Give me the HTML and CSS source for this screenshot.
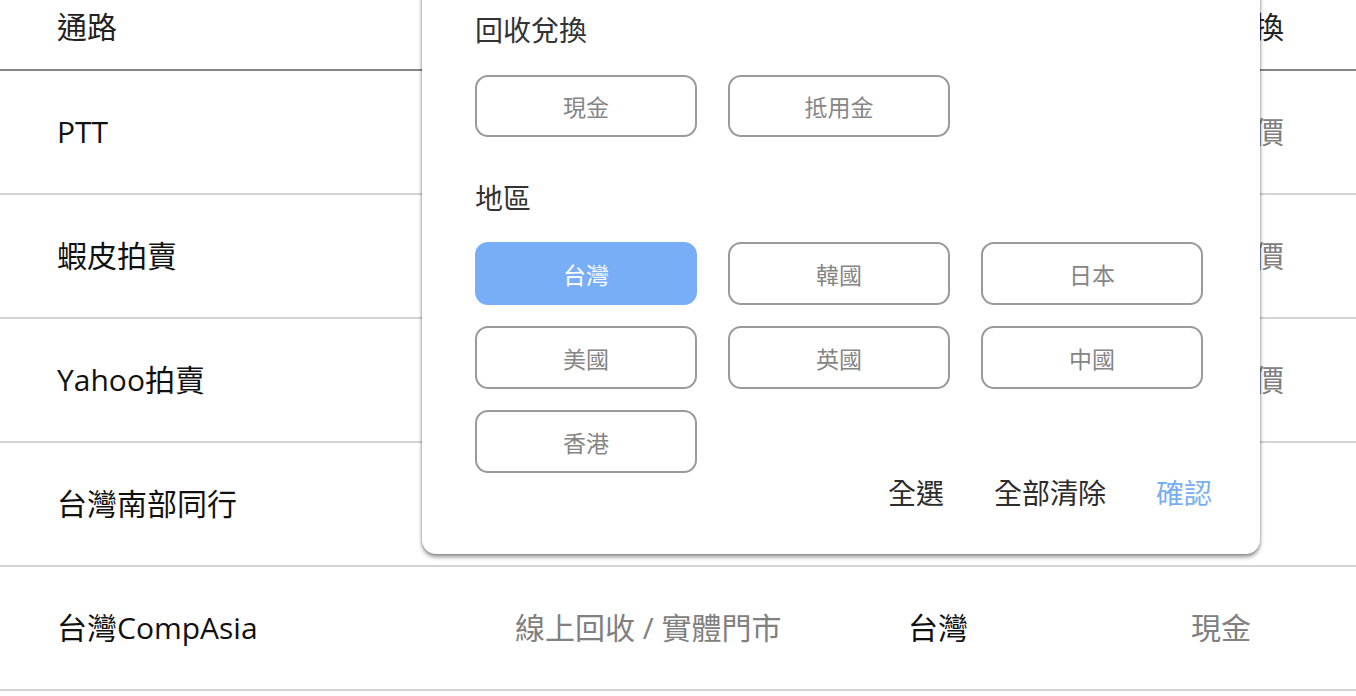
FILE: index.html
```html
<!DOCTYPE html>
<html lang="zh-Hant">
<head>
<meta charset="utf-8">
<title>回收通路</title>
<link rel="stylesheet" href="styles.css">
</head>
<body>
<div class="page">
  <div class="table">
    <div class="row head">
      <div class="c1">通路</div>
      <div class="c2"></div>
      <div class="c3"></div>
      <div class="c4">回收兌換</div>
    </div>
    <div class="row">
      <div class="c1">PTT</div>
      <div class="c2 muted"></div>
      <div class="c3"></div>
      <div class="c4 muted">自行議價</div>
    </div>
    <div class="row">
      <div class="c1">蝦皮拍賣</div>
      <div class="c2 muted"></div>
      <div class="c3"></div>
      <div class="c4 muted">自行議價</div>
    </div>
    <div class="row">
      <div class="c1">Yahoo拍賣</div>
      <div class="c2 muted"></div>
      <div class="c3"></div>
      <div class="c4 muted">自行議價</div>
    </div>
    <div class="row">
      <div class="c1">台灣南部同行</div>
      <div class="c2 muted"></div>
      <div class="c3"></div>
      <div class="c4 muted"></div>
    </div>
    <div class="row">
      <div class="c1">台灣CompAsia</div>
      <div class="c2 muted">線上回收 / 實體門市</div>
      <div class="c3">台灣</div>
      <div class="c4 muted shift">現金</div>
    </div>
  </div>

  <div class="popup">
    <div class="section-title">回收兌換</div>
    <div class="options first">
      <button class="opt">現金</button>
      <button class="opt">抵用金</button>
    </div>
    <div class="section-title second">地區</div>
    <div class="options">
      <button class="opt active">台灣</button>
      <button class="opt">韓國</button>
      <button class="opt">日本</button>
      <button class="opt">美國</button>
      <button class="opt">英國</button>
      <button class="opt">中國</button>
      <button class="opt">香港</button>
    </div>
    <div class="actions">
      <span class="act">全選</span>
      <span class="act">全部清除</span>
      <span class="act confirm">確認</span>
    </div>
  </div>
</div>
</body>
</html>
```
FILE: styles.css
```css
html, body {
  margin: 0;
  padding: 0;
  background: #ffffff;
  overflow: hidden;
}
body {
  font-family: "Open Sans", "Noto Sans CJK TC", sans-serif;
  color: #111111;
  width: 1356px;
  height: 696px;
}
.page {
  position: relative;
  width: 1356px;
  height: 696px;
  overflow: hidden;
}
.table {
  display: flex;
  flex-direction: column;
}
.row {
  display: grid;
  grid-template-columns: 458px 393px 256px 120px 1fr;
  padding-left: 57px;
  height: 122px;
  align-items: center;
  border-bottom: 2px solid #d4d4d4;
  font-size: 30px;
  line-height: 40px;
  white-space: nowrap;
}
.row.head {
  align-items: start;
  padding-top: 7px;
  box-sizing: border-box;
  height: 71px;
  border-bottom: 2px solid #858585;
  color: #222222;
}
.c4 {
  text-align: center;
}
.c4.shift {
  padding-right: 6px;
}
.muted {
  color: #808080;
}
.popup {
  position: absolute;
  left: 422px;
  top: -30px;
  width: 838px;
  box-sizing: border-box;
  padding: 40px 57px 41px 53px;
  background: #ffffff;
  border-radius: 14px;
  box-shadow: 0 3px 4px rgba(0, 0, 0, 0.42), 0 0 2px rgba(0, 0, 0, 0.3);
}
.section-title {
  font-size: 28px;
  line-height: 40px;
  color: #333333;
}
.section-title.second {
  margin-top: 41px;
}
.options {
  display: grid;
  grid-template-columns: repeat(3, 222px);
  column-gap: 31px;
  row-gap: 21px;
  margin-top: 24px;
}
.options.first {
  margin-top: 25px;
}
.options.first .opt {
  height: 62px;
}
.opt {
  height: 63px;
  box-sizing: border-box;
  border: 2px solid #9a9a9a;
  border-radius: 13px;
  background: #ffffff;
  color: #858585;
  font-family: "Open Sans", "Noto Sans CJK TC", sans-serif;
  font-size: 23px;
  padding: 0;
}
.opt.active {
  background: #78aef8;
  border-color: #78aef8;
  color: #ffffff;
}
.actions {
  display: flex;
  justify-content: flex-end;
  gap: 50px;
  margin-right: -9px;
  font-size: 28px;
  line-height: 40px;
  color: #2c2c2c;
}
.act.confirm {
  color: #78aef2;
}
```
